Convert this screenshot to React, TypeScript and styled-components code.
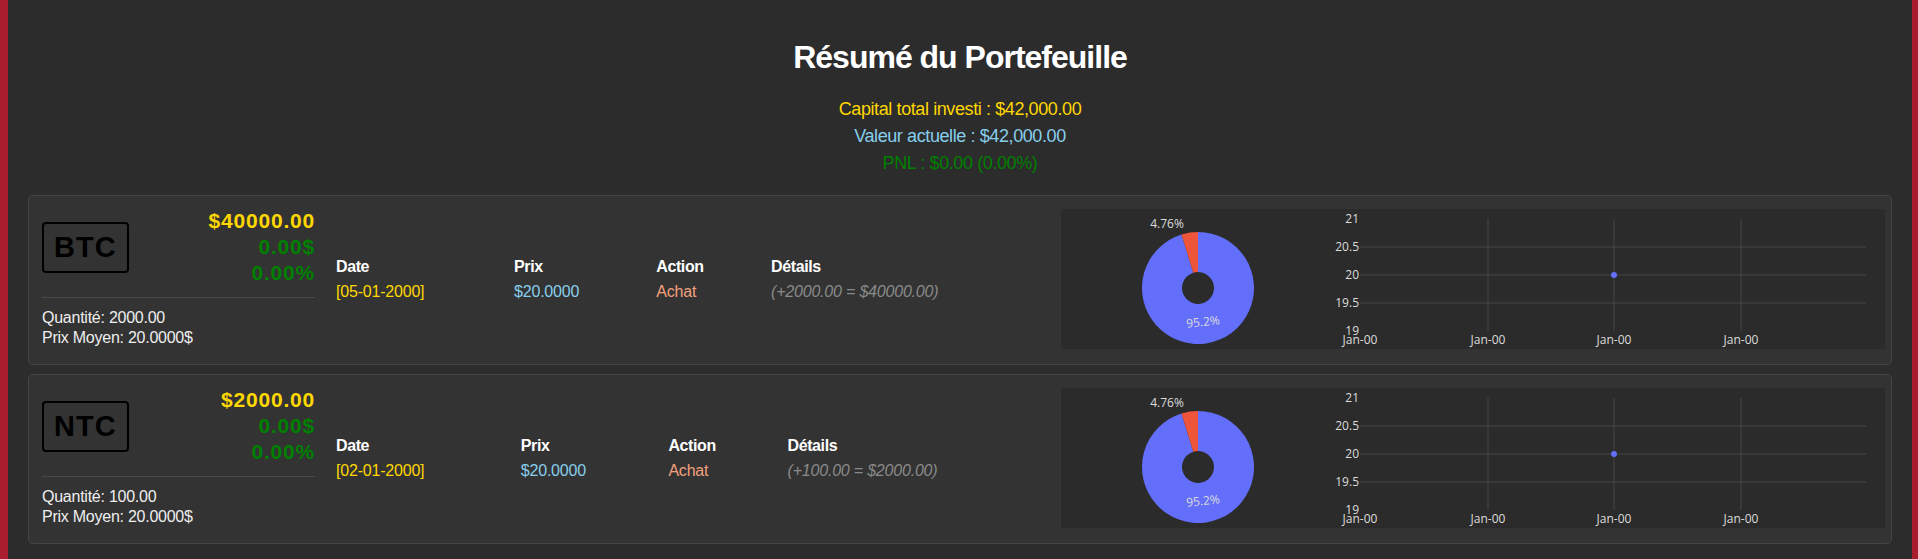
import styled, { createGlobalStyle } from "styled-components";

interface ITransaction {
    date: string;
    price: string;
    action: string;
    details: string;
}

interface IAsset {
    symbol: string;
    total: string;
    pnl: string;
    pnlPct: string;
    qty: string;
    avg: string;
    transactions: ITransaction[];
}

const assets: IAsset[] = [
    {
        symbol: "BTC", total: "$40000.00", pnl: "0.00$", pnlPct: "0.00%",
        qty: "2000.00", avg: "20.0000$",
        transactions: [{ date: "[05-01-2000]", price: "$20.0000", action: "Achat", details: "(+2000.00 = $40000.00)" }],
    },
    {
        symbol: "NTC", total: "$2000.00", pnl: "0.00$", pnlPct: "0.00%",
        qty: "100.00", avg: "20.0000$",
        transactions: [{ date: "[02-01-2000]", price: "$20.0000", action: "Achat", details: "(+100.00 = $2000.00)" }],
    },
];

// share of the portfolio for the donut (same for every card, like the original)
const slices = [
    { value: 95.24, color: "#636efa" },
    { value: 4.76, color: "#ef553b" },
];

// Helper: donut segment path, angles in degrees clockwise from 12 o'clock
const donutPath = (cx: number, cy: number, R: number, r: number, a0: number, a1: number) => {
    const rad = (a: number) => (a * Math.PI) / 180;
    const pt = (rr: number, a: number) => `${cx + rr * Math.sin(rad(a))} ${cy - rr * Math.cos(rad(a))}`;
    const large = Math.abs(a1 - a0) > 180 ? 1 : 0;
    return `M${pt(R, a0)} A${R} ${R} 0 ${large} 1 ${pt(R, a1)} L${pt(r, a1)} A${r} ${r} 0 ${large} 0 ${pt(r, a0)} Z`;
};

const PieChart = () => {
    const cx = 137, cy = 79;
    const redSpan = (slices[1].value / 100) * 360;
    return (
        <PieBox>
            <svg width="274" height="140" viewBox="0 0 274 140">
                <path d={donutPath(cx, cy, 56, 16, 0, 360 - redSpan)} fill={slices[0].color} />
                <path d={donutPath(cx, cy, 56, 16, 360 - redSpan, 360)} fill={slices[1].color} />
                <ChartText x="106" y="19" textAnchor="middle">4.76%</ChartText>
                <ChartText x="142" y="117" textAnchor="middle" transform="rotate(-6 142 113)" fill="#ffffff">95.2%</ChartText>
            </svg>
        </PieBox>
    );
};

const LineChart = () => {
    const left = 25, right = 531, top = 10, bottom = 122;
    const yTicks = ["21", "20.5", "20", "19.5", "19"];
    const xTicks = [25, 153, 279, 406];
    const step = (bottom - top) / 4;
    return (
        <LineBox>
            <svg width="550" height="140" viewBox="0 0 550 140">
                {[1, 2, 3].map((i) => (
                    <line key={i} x1={left} x2={right} y1={top + step * i} y2={top + step * i} stroke="#464646" strokeWidth="1" />
                ))}
                {xTicks.slice(1).map((x) => (
                    <line key={x} x1={x} x2={x} y1={top} y2={bottom} stroke="#464646" strokeWidth="1" />
                ))}
                {yTicks.map((t, i) => (
                    <ChartText key={t} x="24" y={top + step * i + 4} textAnchor="end">{t}</ChartText>
                ))}
                {xTicks.map((x) => (
                    <ChartText key={x} x={x} y="135" textAnchor="middle">Jan-00</ChartText>
                ))}
                <circle cx="279" cy={top + step * 2} r="3" fill="#636efa" />
            </svg>
        </LineBox>
    );
};

const AssetCard = ({ symbol, total, pnl, pnlPct, qty, avg, transactions }: IAsset) => (
    <Card>
        <LeftInfo>
            <TopRow>
                <SymbolBox>{symbol}</SymbolBox>
                <Values>
                    <Value $color="#ffd700">{total}</Value>
                    <Value $color="#008000">{pnl}</Value>
                    <Value $color="#008000">{pnlPct}</Value>
                </Values>
            </TopRow>
            <Divider />
            <InfoLine>Quantité: {qty}</InfoLine>
            <InfoLine>Prix Moyen: {avg}</InfoLine>
        </LeftInfo>

        <TableWrap>
            <TxTable>
                <thead>
                    <tr>
                        <th>Date</th>
                        <th>Prix</th>
                        <th>Action</th>
                        <th>Détails</th>
                    </tr>
                </thead>
                <tbody>
                    {transactions.map((t) => (
                        <tr key={t.date}>
                            <Cell $color="#ffd700">{t.date}</Cell>
                            <Cell $color="#87ceeb">{t.price}</Cell>
                            <Cell $color="#f4a07e">{t.action}</Cell>
                            <Cell $color="#8a8a8a" $italic>{t.details}</Cell>
                        </tr>
                    ))}
                </tbody>
            </TxTable>
        </TableWrap>

        <ChartPanel>
            <PieChart />
            <LineChart />
        </ChartPanel>
    </Card>
);

const App = () => (
    <>
        <GlobalStyle />
        <Page>
            <Header>
                <Title>Résumé du Portefeuille</Title>
                <Summary $color="#ffd700">Capital total investi : $42,000.00</Summary>
                <Summary $color="#87ceeb">Valeur actuelle : $42,000.00</Summary>
                <Summary $color="#008000">PNL : $0.00 (0.00%)</Summary>
            </Header>
            <CardList>
                {assets.map((a) => <AssetCard key={a.symbol} {...a} />)}
            </CardList>
        </Page>
    </>
);

export default App;

// ================= STYLES =================

const GlobalStyle = createGlobalStyle`
    * { box-sizing: border-box; }
    html { background: #a91d2f; }
    body {
        margin: 0 6px 0 8px;
        font-family: "Liberation Sans", Arial, sans-serif;
        color: #f0f0f0;
    }
`;

const Page = styled.div`
    min-height: 100vh;
    background: #2c2c2c;
    padding: 39px 20px 15px;
`;

const Header = styled.header`
    text-align: center;
    margin-bottom: 18px;
`;

const Title = styled.h1`
    margin: 0 0 20px;
    font-size: 32px; line-height: 37px; font-weight: 700;
    letter-spacing: -1px; color: #ffffff;
`;

const Summary = styled.div<{ $color: string }>`
    font-size: 18px; line-height: 27px;
    letter-spacing: -0.4px;
    color: ${({ $color }) => $color};
`;

const CardList = styled.div` display: flex; flex-direction: column; gap: 9px; `;

const Card = styled.div`
    display: flex; align-items: center;
    padding: 12px 6px 14px 13px;
    background: #333333;
    border: 1px solid #454545; border-radius: 5px;
`;

const LeftInfo = styled.div` width: 273px; flex: none; margin-right: 8px; padding-bottom: 2px; `;

const TopRow = styled.div` display: flex; justify-content: space-between; align-items: center; `;

const SymbolBox = styled.div`
    border: 2px solid #000; border-radius: 4px;
    padding: 0 10px;
    font-size: 29px; line-height: 47px; font-weight: 700;
    letter-spacing: 1px; color: #000;
`;

const Values = styled.div` text-align: right; `;

const Value = styled.div<{ $color: string }>`
    font-size: 21px; line-height: 26px; font-weight: 700;
    letter-spacing: 0.8px;
    color: ${({ $color }) => $color};
`;

const Divider = styled.hr`
    margin: 11px 0 10px; border: none; border-top: 1px solid #4a4a4a;
`;

const InfoLine = styled.div`
    font-size: 16px; line-height: 20px; letter-spacing: -0.25px; color: #eeeeee;
`;

const TableWrap = styled.div` flex: 1; min-width: 0; margin-right: 3px; `;

const TxTable = styled.table`
    width: 100%; border-collapse: collapse;
    th, td { padding: 0 14px 0 13px; line-height: 25px; text-align: left; font-size: 16px; white-space: nowrap; }
    th { font-weight: 700; color: #ffffff; letter-spacing: -0.4px; }
`;

const Cell = styled.td<{ $color: string; $italic?: boolean }>`
    color: ${({ $color }) => $color};
    font-style: ${({ $italic }) => ($italic ? "italic" : "normal")};
    letter-spacing: -0.2px;
`;

const ChartPanel = styled.div`
    flex: none; display: flex;
    width: 824px; height: 140px;
    background: #2b2b2b;
`;

const PieBox = styled.div` width: 274px; height: 140px; svg { display: block; } `;
const LineBox = styled.div` width: 550px; height: 140px; svg { display: block; overflow: visible; } `;

const ChartText = styled.text`
    font-family: "Open Sans", sans-serif; font-size: 12px;
    fill: #dcdcdc;
`;
